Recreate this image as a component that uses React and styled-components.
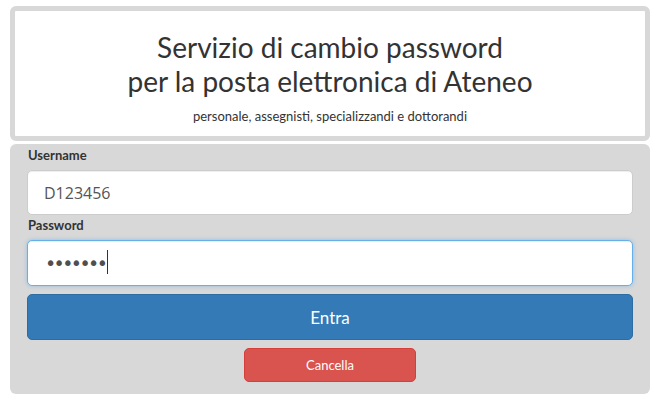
import React from "react";
import styled, { createGlobalStyle } from "styled-components";

const GlobalStyle = createGlobalStyle`
  html, body {
    margin: 0;
    padding: 0;
    background: #ffffff;
  }
  body {
    font-family: Lato, "Open Sans", sans-serif;
    color: #333333;
  }
  * {
    box-sizing: border-box;
  }
`;

const Page = styled.div`
  width: 640px;
  margin: 6px 0 0 10px;
  display: flex;
  flex-direction: column;
  gap: 3px;
`;

const Header = styled.div`
  height: 135px;
  background-color: #ffffff;
  border: 5px solid #d8d8d8;
  border-radius: 6px;
  display: flex;
  flex-direction: column;
  align-items: center;
  padding-top: 19px;
`;

const Title = styled.h1`
  margin: 0;
  font-size: 28px;
  font-weight: 400;
  line-height: 34px;
  text-align: center;
  color: #333333;
`;

const Subtitle = styled.p`
  margin: 10px 0 0;
  font-size: 13px;
  line-height: 16px;
  color: #333333;
`;

const Panel = styled.form`
  background-color: #d8d8d8;
  border-radius: 6px;
  padding: 4px 17px 12px;
  display: flex;
  flex-direction: column;
`;

const Label = styled.label`
  font-size: 13px;
  font-weight: 700;
  line-height: 14px;
  color: #333333;
  margin: ${({ $first }) => ($first ? "0" : "3px")} 0 8px 1px;
`;

const Field = styled.div`
  position: relative;
  margin-bottom: ${({ $last }) => ($last ? "8px" : "0")};
`;

const Input = styled.input`
  display: block;
  height: ${({ $focus }) => ($focus ? "46px" : "45px")};
  width: 100%;
  padding: 0 16px;
  font-family: "Open Sans", sans-serif;
  font-size: 16px;
  color: #555555;
  background: #ffffff;
  border: 1px solid ${({ $focus }) => ($focus ? "#66afe9" : "#cccccc")};
  border-radius: 5px;
  outline: none;
  caret-color: transparent;
  box-shadow: ${({ $focus }) =>
    $focus
      ? "inset 0 1px 1px rgba(0,0,0,.075), 0 0 4px rgba(102,175,233,.6)"
      : "inset 0 1px 1px rgba(0,0,0,.075)"};

  &[type="password"] {
    font-family: "DejaVu Sans", sans-serif;
    font-size: 19px;
    letter-spacing: -2.6px;
    color: #4f4f4f;
    padding-left: 17px;
  }
`;

const Caret = styled.span`
  position: absolute;
  left: 80px;
  top: 10px;
  width: 1px;
  height: 24px;
  background: #333333;
`;

const Button = styled.button`
  font-family: Lato, "Open Sans", sans-serif;
  color: #ffffff;
  cursor: pointer;
  border-radius: 5px;
  border: 1px solid ${({ $variant }) => ($variant === "danger" ? "#d43f3a" : "#2e6da4")};
  background-color: ${({ $variant }) => ($variant === "danger" ? "#d9534f" : "#337ab7")};
  font-size: ${({ $size }) => ($size === "lg" ? "17px" : "13px")};
  height: ${({ $size }) => ($size === "lg" ? "46px" : "34px")};
  width: ${({ $size }) => ($size === "lg" ? "100%" : "172px")};
  align-self: center;
  padding: 0;
`;

const Actions = styled.div`
  display: flex;
  flex-direction: column;
  gap: 8px;
`;

export default function App() {
  return (
    <>
      <GlobalStyle />
      <Page>
        <Header>
          <Title>
            Servizio di cambio password
            <br />
            per la posta elettronica di Ateneo
          </Title>
          <Subtitle>personale, assegnisti, specializzandi e dottorandi</Subtitle>
        </Header>
        <Panel onSubmit={(e) => e.preventDefault()}>
          <Label $first htmlFor="username">Username</Label>
          <Field>
            <Input id="username" type="text" defaultValue="D123456" />
          </Field>
          <Label htmlFor="password">Password</Label>
          <Field $last>
            <Input id="password" type="password" defaultValue="1234567" $focus />
            <Caret />
          </Field>
          <Actions>
            <Button type="submit" $size="lg">Entra</Button>
            <Button type="button" $variant="danger">Cancella</Button>
          </Actions>
        </Panel>
      </Page>
    </>
  );
}
